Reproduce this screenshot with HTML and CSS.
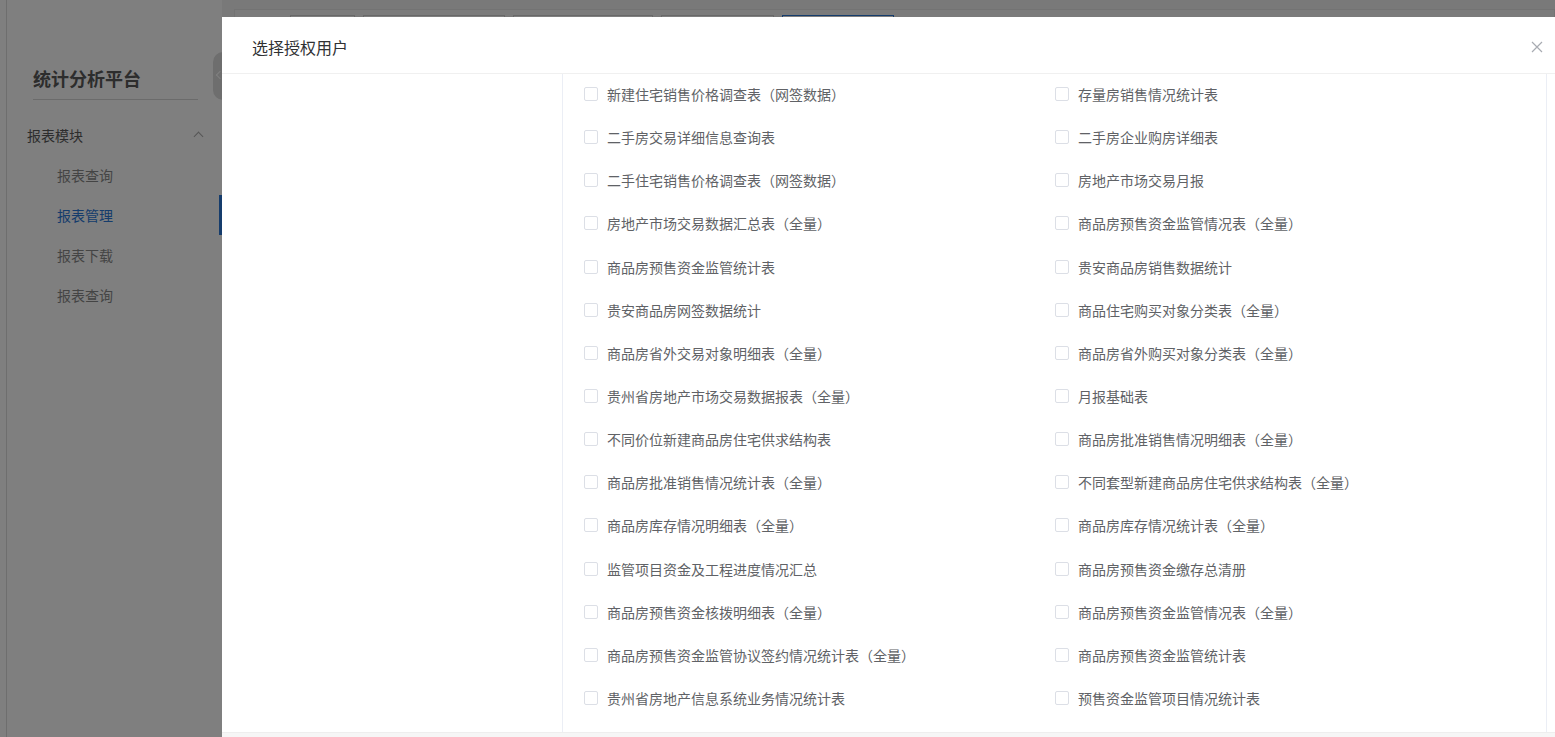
FILE: index.html
```html
<!DOCTYPE html>
<html>
<head>
<meta charset="utf-8">
<title>报表管理</title>
<link rel="stylesheet" href="styles.css">
</head>
<body>
<div class="layout">
	<div class="sidebar">
		<div class="logo">统计分析平台</div>
		<div class="menu">
			<div class="menu-title">报表模块<span class="arrow-up"></span></div>
			<div class="menu-item">报表查询</div>
			<div class="menu-item active">报表管理</div>
			<div class="menu-item">报表下载</div>
			<div class="menu-item">报表查询</div>
		</div>
		<div class="fold-btn"><span class="arrow-left"></span></div>
	</div>
	<div class="main">
		<div class="card">
			<div class="tabs">
				<span class="tab tab1"></span>
				<span class="tab tab2"></span>
				<span class="tab tab3"></span>
				<span class="tab tab4"></span>
				<span class="tab tab5 on"></span>
			</div>
		</div>
	</div>
</div>

<div class="mask"></div>
<div class="dialog">
	<div class="dialog-header">
		<span class="dialog-title">选择授权用户</span>
		<span class="dialog-close">
			<svg width="12" height="12" viewBox="0 0 12 12"><path d="M1 1L11 11M11 1L1 11" stroke="#a8abb2" stroke-width="1.2" fill="none"/></svg>
		</span>
	</div>
	<div class="dialog-body">
		<div class="user-panel"></div>
		<div class="report-panel">
			<div class="report-list">
				<label class="report-item"><span class="cb"></span>新建住宅销售价格调查表（网签数据）</label>
				<label class="report-item"><span class="cb"></span>存量房销售情况统计表</label>
				<label class="report-item"><span class="cb"></span>二手房交易详细信息查询表</label>
				<label class="report-item"><span class="cb"></span>二手房企业购房详细表</label>
				<label class="report-item"><span class="cb"></span>二手住宅销售价格调查表（网签数据）</label>
				<label class="report-item"><span class="cb"></span>房地产市场交易月报</label>
				<label class="report-item"><span class="cb"></span>房地产市场交易数据汇总表（全量）</label>
				<label class="report-item"><span class="cb"></span>商品房预售资金监管情况表（全量）</label>
				<label class="report-item"><span class="cb"></span>商品房预售资金监管统计表</label>
				<label class="report-item"><span class="cb"></span>贵安商品房销售数据统计</label>
				<label class="report-item"><span class="cb"></span>贵安商品房网签数据统计</label>
				<label class="report-item"><span class="cb"></span>商品住宅购买对象分类表（全量）</label>
				<label class="report-item"><span class="cb"></span>商品房省外交易对象明细表（全量）</label>
				<label class="report-item"><span class="cb"></span>商品房省外购买对象分类表（全量）</label>
				<label class="report-item"><span class="cb"></span>贵州省房地产市场交易数据报表（全量）</label>
				<label class="report-item"><span class="cb"></span>月报基础表</label>
				<label class="report-item"><span class="cb"></span>不同价位新建商品房住宅供求结构表</label>
				<label class="report-item"><span class="cb"></span>商品房批准销售情况明细表（全量）</label>
				<label class="report-item"><span class="cb"></span>商品房批准销售情况统计表（全量）</label>
				<label class="report-item"><span class="cb"></span>不同套型新建商品房住宅供求结构表（全量）</label>
				<label class="report-item"><span class="cb"></span>商品房库存情况明细表（全量）</label>
				<label class="report-item"><span class="cb"></span>商品房库存情况统计表（全量）</label>
				<label class="report-item"><span class="cb"></span>监管项目资金及工程进度情况汇总</label>
				<label class="report-item"><span class="cb"></span>商品房预售资金缴存总清册</label>
				<label class="report-item"><span class="cb"></span>商品房预售资金核拨明细表（全量）</label>
				<label class="report-item"><span class="cb"></span>商品房预售资金监管情况表（全量）</label>
				<label class="report-item"><span class="cb"></span>商品房预售资金监管协议签约情况统计表（全量）</label>
				<label class="report-item"><span class="cb"></span>商品房预售资金监管统计表</label>
				<label class="report-item"><span class="cb"></span>贵州省房地产信息系统业务情况统计表</label>
				<label class="report-item"><span class="cb"></span>预售资金监管项目情况统计表</label>
			</div>
		</div>
	</div>
	<div class="dialog-footer"></div>
</div>
</body>
</html>
```

FILE: styles.css
```css
*{margin: 0;padding: 0;box-sizing: border-box;}
html,body{height: 100%;}
body{font: 14px "Noto Sans CJK SC","Noto Sans",sans-serif;color: #606266;overflow: hidden;background-color: #fff;}

.layout{display: flex;height: 100%;padding-left: 6px;}
.sidebar{width: 216px;flex: none;position: relative;background-color: #fff;border-left: 1px solid #dcdcdc;}
.logo{margin: 0 24px 0 26px;height: 100px;padding-top: 60px;font-size: 18px;font-weight: bold;line-height: 36px;color: #5a5a5a;border-bottom: 1px solid #d6d6d6;}
.menu{padding-top: 15px;}
.menu-title{height: 40px;line-height: 40px;padding-left: 20px;color: #5a5a5a;position: relative;}
.arrow-up{position: absolute;left: 188px;top: 18px;width: 7px;height: 7px;border-left: 1px solid #aaa;border-top: 1px solid #aaa;transform: rotate(45deg);}
.menu-item{height: 40px;line-height: 40px;padding-left: 50px;color: #888;}
.menu-item.active{color: #2b78d8;border-right: 3px solid #2b78d8;}
.fold-btn{position: absolute;left: 206px;top: 52px;width: 24px;height: 48px;border-radius: 10px;background-color: #dcdcdc;}
.arrow-left{position: absolute;left: 4px;top: 20px;width: 6px;height: 6px;border-left: 1px solid #fff;border-bottom: 1px solid #fff;transform: rotate(45deg);}

.main{flex: 1;background-color: #f3f3f3;padding: 9px 0 0 12px;}
.card{background-color: #f7f7f7;border: 1px solid #e6e6e6;height: 100%;padding: 5px 0 0 55px;}
.tabs{display: flex;gap: 8px;}
.tab{height: 32px;border: 1px solid #d0d0d0;background-color: #fff;}
.tab1{width: 65px;}
.tab2{width: 142px;}
.tab3{width: 140px;}
.tab4{width: 113px;}
.tab5{width: 112px;}
.tab.on{border-color: #2b78d8;}

.mask{position: fixed;left: 0;top: 0;right: 0;bottom: 0;background-color: rgba(0,0,0,.5);}
.dialog{position: fixed;left: 222px;top: 17px;right: 0;height: 780px;background-color: #fff;display: flex;flex-direction: column;}
.dialog-header{height: 57px;flex: none;padding: 4px 30px 0;display: flex;align-items: center;justify-content: space-between;border-bottom: 1px solid #f0f0f0;}
.dialog-title{font-size: 16px;color: #303133;}
.dialog-close{display: flex;margin-right: -18px;}
.dialog-body{height: 658px;flex: none;display: flex;overflow: hidden;}
.user-panel{width: 341px;flex: none;border-right: 1px solid #ebeef5;}
.report-panel{width: 984px;flex: none;border-right: 1px solid #ebeef5;}
.report-list{display: grid;grid-template-columns: 471px 471px;grid-auto-rows: 20px;row-gap: 23.15px;padding: 10px 0 0 21px;}
.report-item{display: flex;align-items: center;line-height: 20px;white-space: nowrap;cursor: pointer;}
.cb{width: 14px;height: 14px;border: 1px solid #dcdfe6;border-radius: 2px;background-color: #fff;margin-right: 9px;flex: none;}
.dialog-footer{flex: 1;background-color: #f6f6f6;border-top: 1px solid #eeeeee;}
```
